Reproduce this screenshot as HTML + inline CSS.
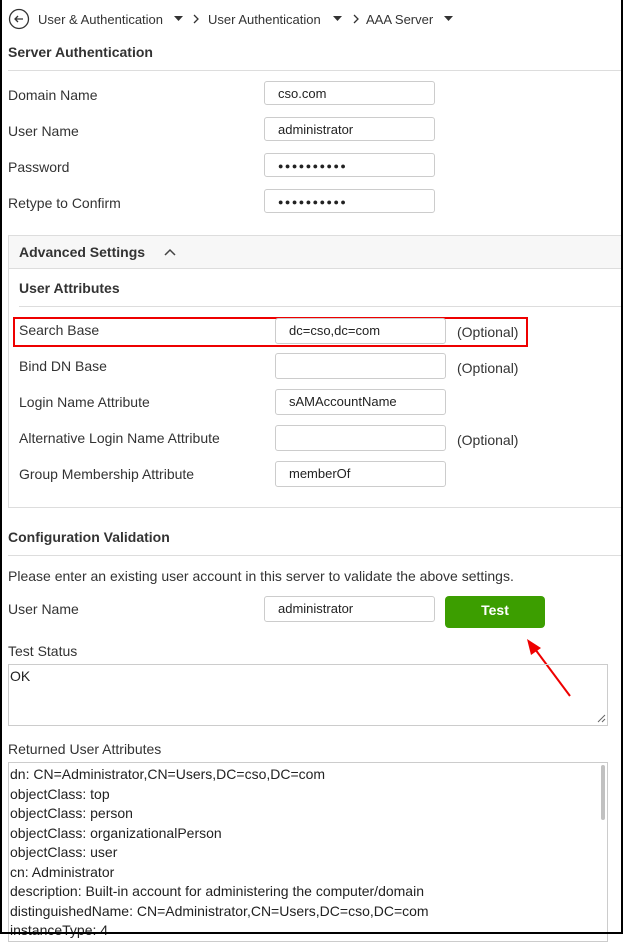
<!DOCTYPE html><html><head><style>
body{margin:0;width:623px;height:934px;overflow:hidden;background:#fff;font-family:"Liberation Sans",sans-serif;color:#333;position:relative}
.frame{position:absolute;left:0;top:0;width:623px;height:934px;border:2px solid #000;border-top:none;box-sizing:border-box;z-index:10}
.a{position:absolute;white-space:nowrap}
.lbl{font-size:14px;color:#333}
.h{font-size:14px;font-weight:bold;color:#333}
.in{position:absolute;border:1px solid #ccc;border-radius:3px;height:24px;width:171px;font-size:13px;line-height:24px;padding-left:13px;box-sizing:border-box;color:#222}
.hr{position:absolute;height:1px;background:#ddd}
.opt{font-size:14px;color:#333}
.ta{position:absolute;border:1px solid #ccc;box-sizing:border-box;font-size:14px;line-height:19.5px;padding:2px 0 0 1px;color:#222;overflow:hidden}
.dots{font-size:9px;letter-spacing:1.5px}
</style></head><body>
<div class="frame"></div>
<svg class="a" style="left:8px;top:8px" width="22" height="22"><circle cx="11" cy="11" r="9.5" fill="none" stroke="#333" stroke-width="1.3"/><path d="M15 11H7M10 8L7 11L10 14" fill="none" stroke="#333" stroke-width="1.3"/></svg>
<div class="a" style="left:38px;top:12px;font-size:13px;color:#333">User &amp; Authentication</div>
<svg class="a" style="left:174px;top:16px" width="10" height="6"><path d="M0 0H9L4.5 5Z" fill="#333"/></svg>
<svg class="a" style="left:193px;top:14px" width="6" height="10"><path d="M1 1L5 5L1 9" fill="none" stroke="#333" stroke-width="1.3"/></svg>
<div class="a" style="left:208px;top:12px;font-size:13px">User Authentication</div>
<svg class="a" style="left:333px;top:16px" width="10" height="6"><path d="M0 0H9L4.5 5Z" fill="#333"/></svg>
<svg class="a" style="left:353px;top:14px" width="6" height="10"><path d="M1 1L5 5L1 9" fill="none" stroke="#333" stroke-width="1.3"/></svg>
<div class="a" style="left:366px;top:12px;font-size:13px">AAA Server</div>
<svg class="a" style="left:444px;top:16px" width="10" height="6"><path d="M0 0H9L4.5 5Z" fill="#333"/></svg>
<div class="a h" style="left:8px;top:44px">Server Authentication</div>
<div class="hr" style="left:8px;top:70px;width:615px"></div>
<div class="a lbl" style="left:8px;top:87px">Domain Name</div><div class="in" style="left:264px;top:81px">cso.com</div>
<div class="a lbl" style="left:8px;top:123px">User Name</div><div class="in" style="left:264px;top:117px">administrator</div>
<div class="a lbl" style="left:8px;top:159px">Password</div><div class="in dots" style="left:264px;top:153px">●●●●●●●●●●</div>
<div class="a lbl" style="left:8px;top:195px">Retype to Confirm</div><div class="in dots" style="left:264px;top:189px">●●●●●●●●●●</div>
<div class="a" style="left:8px;top:235px;width:615px;height:273px;border:1px solid #ddd;border-right:none;box-sizing:border-box"></div>
<div class="a" style="left:9px;top:236px;width:614px;height:32px;background:#f7f7f7;border-bottom:1px solid #ddd"></div>
<div class="a h" style="left:19px;top:244px">Advanced Settings</div>
<svg class="a" style="left:163px;top:247px" width="14" height="10"><path d="M2 8L7 3L12 8" fill="none" stroke="#444" stroke-width="1.5"/></svg>
<div class="a h" style="left:19px;top:280px">User Attributes</div>
<div class="hr" style="left:19px;top:306px;width:604px"></div>
<div class="a" style="left:13px;top:317px;width:515px;height:30px;border:2px solid #e00;box-sizing:border-box"></div>
<div class="a lbl" style="left:19px;top:322px">Search Base</div><div class="in" style="left:275px;top:318px;height:26px">dc=cso,dc=com</div><div class="a opt" style="left:457px;top:324px">(Optional)</div>
<div class="a lbl" style="left:19px;top:358px">Bind DN Base</div><div class="in" style="left:275px;top:353px;height:26px"></div><div class="a opt" style="left:457px;top:360px">(Optional)</div>
<div class="a lbl" style="left:19px;top:394px">Login Name Attribute</div><div class="in" style="left:275px;top:389px;height:26px">sAMAccountName</div>
<div class="a lbl" style="left:19px;top:430px">Alternative Login Name Attribute</div><div class="in" style="left:275px;top:425px;height:26px"></div><div class="a opt" style="left:457px;top:432px">(Optional)</div>
<div class="a lbl" style="left:19px;top:466px">Group Membership Attribute</div><div class="in" style="left:275px;top:461px;height:26px">memberOf</div>
<div class="a h" style="left:8px;top:529px">Configuration Validation</div>
<div class="hr" style="left:8px;top:555px;width:615px"></div>
<div class="a lbl" style="left:8px;top:568px">Please enter an existing user account in this server to validate the above settings.</div>
<div class="a lbl" style="left:8px;top:601px">User Name</div><div class="in" style="left:264px;top:596px;height:26px">administrator</div>
<div class="a" style="left:445px;top:596px;width:100px;height:32px;background:#3c9e00;border-radius:4px;color:#fff;font-weight:bold;font-size:14px;text-align:center;line-height:29px">Test</div>
<svg class="a" style="left:520px;top:635px" width="60" height="65"><path d="M50 61L12 10" stroke="#e00" stroke-width="2"/><path d="M7 4L21 13L11 20Z" fill="#e00"/></svg>
<div class="a lbl" style="left:8px;top:643px">Test Status</div>
<div class="ta" style="left:8px;top:664px;width:600px;height:62px">OK</div>
<svg class="a" style="left:597px;top:714px" width="9" height="9"><path d="M8 1L1 8M8 5L5 8" stroke="#666" stroke-width="1"/></svg>
<div class="a lbl" style="left:8px;top:741px">Returned User Attributes</div>
<div class="ta" style="left:8px;top:762px;width:600px;height:180px">dn: CN=Administrator,CN=Users,DC=cso,DC=com<br>objectClass: top<br>objectClass: person<br>objectClass: organizationalPerson<br>objectClass: user<br>cn: Administrator<br>description: Built-in account for administering the computer/domain<br>distinguishedName: CN=Administrator,CN=Users,DC=cso,DC=com<br>instanceType: 4</div>
<div class="a" style="left:601px;top:765px;width:4px;height:55px;background:#c1c1c1;border-radius:2px"></div>
</body></html>
